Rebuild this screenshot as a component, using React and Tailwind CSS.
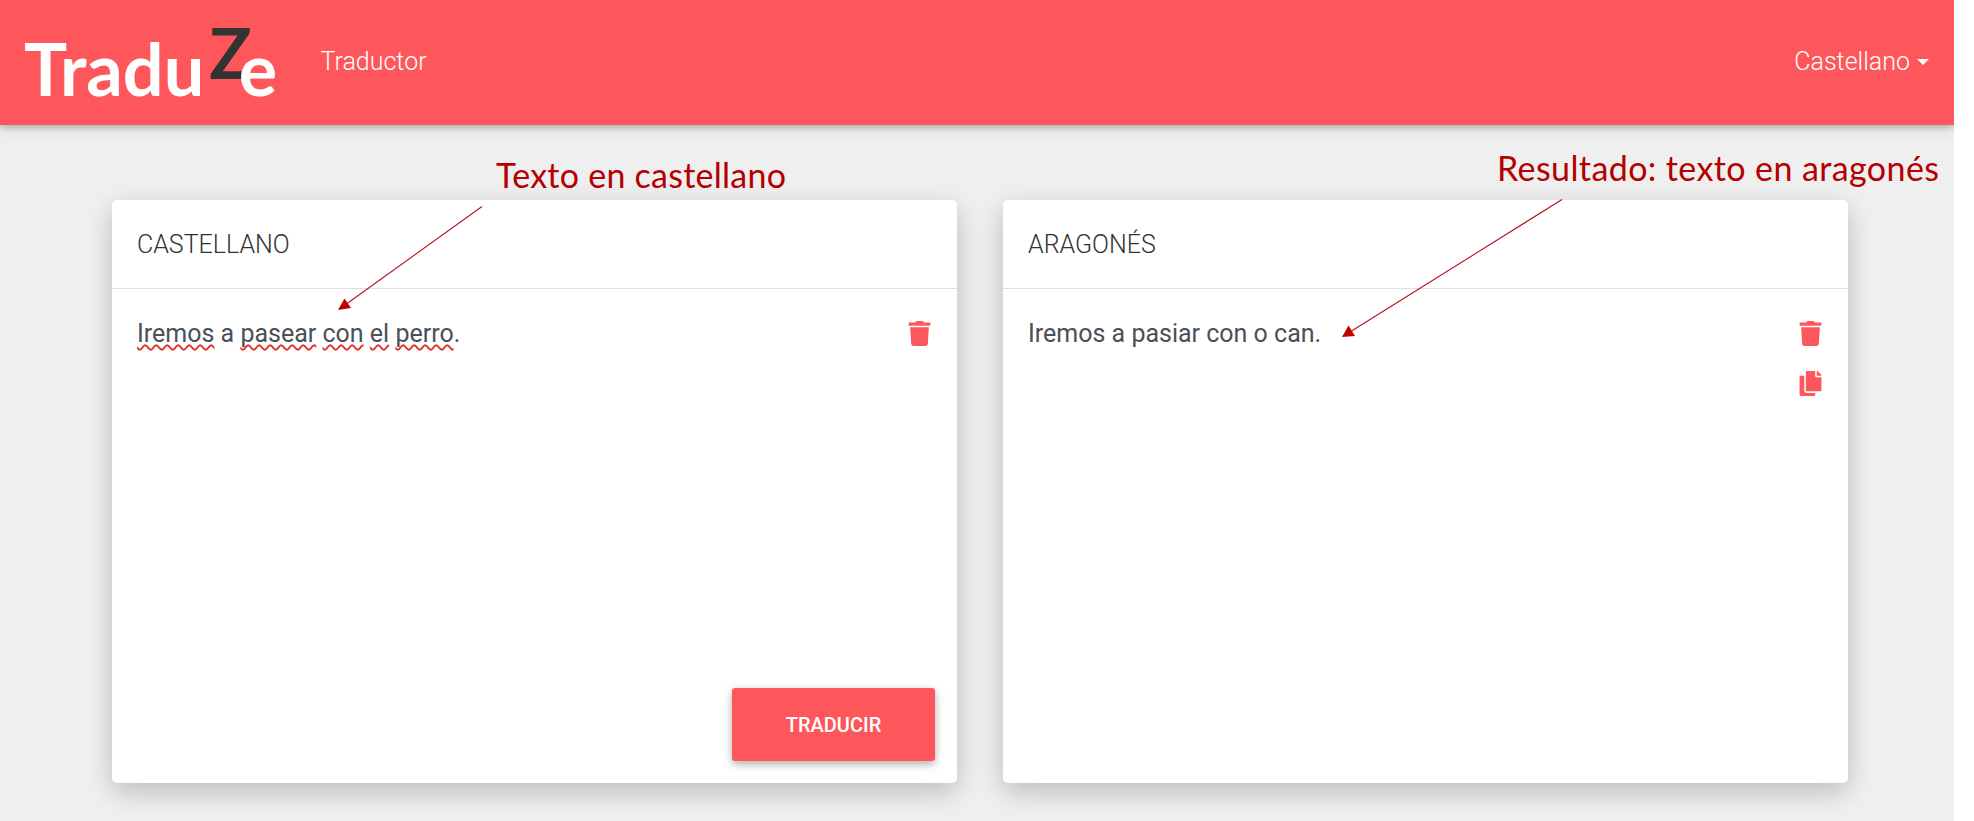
import { FaTrash, FaCopy } from 'react-icons/fa';

function Misspelled({ children }) {
  return (
    <span className="underline decoration-wavy decoration-[#e3302f] decoration-[1.5px] underline-offset-[2px] [text-decoration-skip-ink:none]">
      {children}
    </span>
  );
}

function Logo() {
  return (
    <a className="flex h-[125px] w-[296px] items-start pl-[24px] font-[Lato,sans-serif] text-[72px] leading-[72px] font-bold text-white">
      <span className="mt-[32px]">Tradu</span>
      <span className="mt-[16px] ml-[5px] text-[70px] text-[#333333]">Z</span>
      <span className="mt-[32px] -ml-[13px]">e</span>
    </a>
  );
}

function Navbar() {
  return (
    <header className="relative flex h-[125px] items-center bg-[#fe575b] pr-[25px] text-[25px] leading-[38px] font-light text-white shadow-[0_2px_6px_rgba(0,0,0,0.2),0_3px_13px_rgba(0,0,0,0.15)]">
      <Logo />
      <nav className="ml-[24.5px] flex flex-1 items-center justify-between pb-[1px]">
        <a>Traductor</a>
        <button className="flex items-center">
          Castellano
          <span className="ml-[7px] border-x-[6px] border-t-[6px] border-x-transparent border-t-white" />
        </button>
      </nav>
    </header>
  );
}

function Card({ title, text, actions, footer }) {
  return (
    <section className="flex h-[583px] w-[845px] flex-col rounded-[5px] bg-white shadow-[0_10px_22px_rgba(0,0,0,0.08),0_8px_30px_rgba(0,0,0,0.14)]">
      <h2 className="h-[89px] border-b-[1px] border-[#dcdfe3] px-[25px] pt-[26px] text-[25px] leading-[38px] font-light text-[#2f3338]">
        {title}
      </h2>
      <div className="flex flex-1 justify-between pt-[25px] pr-[25px] pl-[25px]">
        <p className="pt-[1px] text-[25px] leading-[38px] text-[#495057]">{text}</p>
        <div className="flex flex-col gap-[25px] pt-[7px] text-[25px] text-[#fe575b]">{actions}</div>
      </div>
      {footer}
    </section>
  );
}

function Arrow({ x1, y1, x2, y2, head }) {
  return (
    <g>
      <line x1={x1} y1={y1} x2={x2} y2={y2} />
      <path stroke="none" d={head} />
    </g>
  );
}

export default function App() {
  return (
    <div className="relative h-[821px] w-[1974px] overflow-hidden bg-white font-[Roboto,sans-serif]">
      <div className="h-[821px] w-[1954px] overflow-hidden bg-[#efefef]">
        <Navbar />
        <main className="flex gap-[46px] pt-[75px] pl-[112px]">
          <Card
            title="CASTELLANO"
            text={
              <>
                <Misspelled>Iremos</Misspelled> a <Misspelled>pasear</Misspelled> <Misspelled>con</Misspelled>{' '}
                <Misspelled>el</Misspelled> <Misspelled>perro</Misspelled>.
              </>
            }
            actions={<FaTrash />}
            footer={
              <button className="mr-[22px] mb-[22px] h-[73px] w-[203px] self-end rounded-[3px] bg-[#fe575b] text-[20px] font-medium text-white shadow-[0_3px_6px_rgba(0,0,0,0.2),0_3px_13px_rgba(0,0,0,0.15)]">
                TRADUCIR
              </button>
            }
          />
          <Card
            title="ARAGONÉS"
            text="Iremos a pasiar con o can."
            actions={
              <>
                <FaTrash />
                <FaCopy />
              </>
            }
          />
        </main>
      </div>
      <p className="absolute top-[153px] left-[496px] font-[Lato,sans-serif] text-[34px] leading-[44px] tracking-[0.25px] whitespace-nowrap text-[#b40000]">
        Texto en castellano
      </p>
      <p className="absolute top-[146px] left-[1497px] font-[Lato,sans-serif] text-[34px] leading-[44px] tracking-[0.4px] whitespace-nowrap text-[#b40000]">
        Resultado: texto en aragonés
      </p>
      <svg
        className="pointer-events-none absolute inset-0"
        width="1974"
        height="821"
        fill="#c00000"
        stroke="#b5121b"
        strokeWidth="1.1"
      >
        <Arrow x1="482" y1="206.500" x2="345" y2="305" head="M338 310 L344.500 298.500 L351 308 Z" />
        <Arrow x1="1562" y1="199.500" x2="1350" y2="332" head="M1342 337 L1348.500 325.500 L1355 336 Z" />
      </svg>
    </div>
  );
}
